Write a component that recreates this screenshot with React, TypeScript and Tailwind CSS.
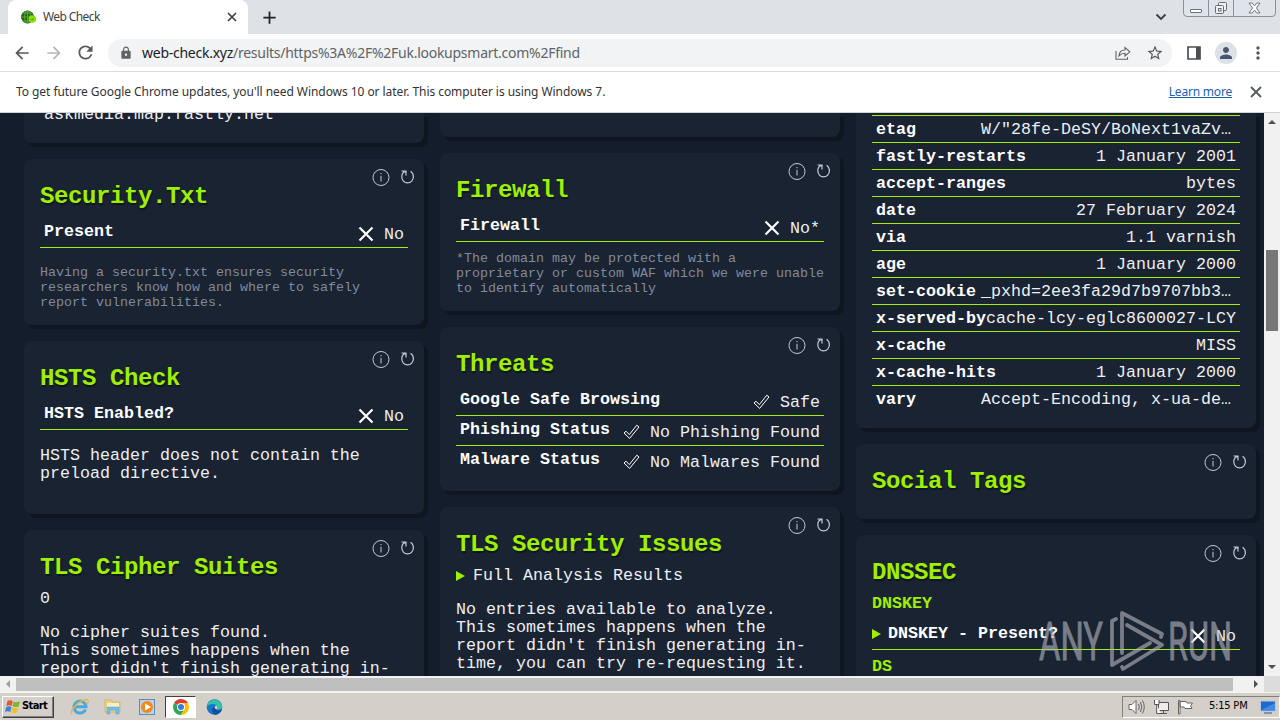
import type { ReactNode } from "react";
import {
  MdAdd,
  MdArrowBack,
  MdArrowForward,
  MdLock,
  MdMoreVert,
  MdPerson,
  MdRefresh,
  MdStarBorder,
} from "react-icons/md";

const headers = [
  { name: "etag", value: 'W/"28fe-DeSY/BoNext1vaZv…' },
  { name: "fastly-restarts", value: "1 January 2001" },
  { name: "accept-ranges", value: "bytes" },
  { name: "date", value: "27 February 2024" },
  { name: "via", value: "1.1 varnish" },
  { name: "age", value: "1 January 2000" },
  { name: "set-cookie", value: "_pxhd=2ee3fa29d7b9707bb3…" },
  { name: "x-served-by", value: "cache-lcy-eglc8600027-LCY" },
  { name: "x-cache", value: "MISS" },
  { name: "x-cache-hits", value: "1 January 2000" },
  { name: "vary", value: "Accept-Encoding, x-ua-de…" },
];

function CrossIcon() {
  return (
    <svg width="16" height="16" viewBox="0 0 16 16" className="mr-[10px] mb-[3px]" aria-hidden="true">
      <path d="M1.5 1.5 14.5 14.5M14.5 1.5 1.5 14.5" stroke="#fff" strokeWidth="2.2" />
    </svg>
  );
}

function CheckIcon() {
  return (
    <svg width="17" height="16" viewBox="0 0 17 16" className="mr-[10px] mb-[3px]" aria-hidden="true">
      <path d="M1 9 3 7.2 6.3 10.6 13.8 1.2 16 3 6.6 14.4Z" fill="none" stroke="#fff" strokeWidth="1" />
    </svg>
  );
}

function CardActions() {
  return (
    <div className="absolute right-[9px] top-[9px] flex items-center gap-[10px] text-[#c3cad9]">
      <svg width="18" height="18" viewBox="0 0 18 18" fill="none" stroke="currentColor" aria-hidden="true">
        <circle cx="9" cy="9.5" r="8" />
        <path d="M9 7.8V13.5M9 5V6.2" />
      </svg>
      <svg width="15" height="18" viewBox="0 0 15 18" fill="none" stroke="currentColor" strokeWidth="1.2" aria-hidden="true">
        <path d="M1.5 3H6V7.5M5.8 3.2C3 4 1.8 6.4 1.8 8.8 1.8 12.3 4.2 14.8 7.5 14.8S13.4 12.3 13.4 8.8C13.4 6.5 12.4 4.5 10.6 3.3" />
      </svg>
    </div>
  );
}

function Card({ title, height, children }: { title: string; height: string; children?: ReactNode }) {
  return (
    <section
      className={`relative shrink-0 rounded-lg bg-[#1a2332] px-4 pt-6 shadow-[4px_4px_0_#0f1620] ${height}`}
    >
      <CardActions />
      <h2 className="text-[24px] leading-[28px] font-bold tracking-[-0.4px] text-[#9fef00] [text-shadow:1px_2px_1px_#0f1620]">
        {title}
      </h2>
      <div className="pt-[7px]">{children}</div>
    </section>
  );
}

function Row({
  label,
  value,
  icon,
  last,
}: {
  label: ReactNode;
  value: string;
  icon?: ReactNode;
  last?: boolean;
}) {
  return (
    <div
      className={`flex h-[30px] justify-between border-b px-1 ${last ? "border-transparent" : "border-[#9fef00]"}`}
    >
      <span className="flex items-center h-5 mt-[4px] font-bold">{label}</span>
      <span className="flex items-center h-5 mt-[7px] text-[#eceff4]">
        {icon}
        {value}
      </span>
    </div>
  );
}

function Marker() {
  return (
    <svg width="9" height="10" viewBox="0 0 9 10" className="mb-px" aria-hidden="true">
      <path d="M0 0 9 5 0 10Z" fill="#9fef00" />
    </svg>
  );
}

function TabStrip() {
  return (
    <div className="relative flex h-[34px] shrink-0 items-center bg-[#dee1e6] pl-2">
      <div className="flex h-full w-60 items-center rounded-t-lg bg-white pl-3 pr-[11px]">
        <svg width="17" height="16" viewBox="0 0 17 16" aria-hidden="true">
          <circle cx="7.5" cy="8" r="6.5" fill="#1f6a1f" />
          <path d="M1 8H14M7.5 1.5V14.5M3 4H12M3 12H12" stroke="#70b830" strokeWidth=".7" />
          <ellipse cx="7.5" cy="8" rx="3" ry="6.5" fill="none" stroke="#70b830" strokeWidth=".7" />
          <circle cx="12.3" cy="10" r="3.8" fill="#8be000" />
          <path d="m10.6 10 1.3 1.3 2-2.4" stroke="#4c9a00" fill="none" />
        </svg>
        <span className="ml-[6px] grow text-[12px] tracking-[-0.6px] text-[#3c4043]">Web Check</span>
        <svg width="10" height="10" viewBox="0 0 10 10" aria-hidden="true">
          <path d="M1 1 9 9M9 1 1 9" stroke="#3c4043" strokeWidth="1.7" />
        </svg>
      </div>
      <MdAdd size={21} color="#202124" className="ml-[11px]" />
      <svg width="12" height="8" viewBox="0 0 12 8" className="ml-auto mr-[113px]" aria-hidden="true">
        <path d="M1.5 1.5 6 6 10.5 1.5" fill="none" stroke="#3c4043" strokeWidth="1.9" />
      </svg>
      <div className="absolute right-[4px] -top-px flex h-[18px] w-[93px] rounded-b-[4px] border border-[#8a9099] bg-[#dfe3ea]">
        <div className="flex w-[25px] items-end justify-center border-r border-[#8a9099] pb-[3px]">
          <span className="h-[4px] w-3 rounded-[1px] border border-[#6b7078] bg-white" />
        </div>
        <div className="flex w-[25px] items-center justify-center border-r border-[#8a9099]">
          <svg width="14" height="14" viewBox="0 0 14 14" fill="#eef0f4" stroke="#666b74" aria-hidden="true">
            <rect x="4.5" y="1.5" width="8" height="8" rx="1" />
            <rect x="1.5" y="4.5" width="8" height="8" rx="1" />
            <rect x="4.5" y="7.5" width="2.5" height="2.5" />
          </svg>
        </div>
        <div className="flex grow items-center justify-center">
          <svg width="13" height="12" viewBox="0 0 13 12" fill="#fff" stroke="#666b74" strokeWidth=".9" aria-hidden="true">
            <path d="M1 1H4.2L6.5 3.8 8.8 1H12L8.4 6 12 11H8.8L6.5 8.2 4.2 11H1L4.6 6Z" />
          </svg>
        </div>
      </div>
    </div>
  );
}

function Toolbar() {
  return (
    <div className="flex h-[38px] shrink-0 items-center border-b border-[#dadce0] bg-white pl-3 pr-[12px]">
      <MdArrowBack size={20} color="#55585c" />
      <MdArrowForward size={20} color="#b5b7ba" className="ml-3" />
      <MdRefresh size={21} color="#55585c" className="ml-[11px]" />
      <div className="ml-3 flex h-7 w-[1064px] items-center rounded-full bg-[#f1f3f4] pl-[11px] pr-2">
        <MdLock size={14} color="#5f6368" />
        <span className="ml-[9px] grow text-[14px] tracking-[-0.26px] text-[#5f6368]">
          <span className="text-[#202124]">web-check.xyz</span>
          /results/https%3A%2F%2Fuk.lookupsmart.com%2Ffind
        </span>
        <svg width="16" height="16" viewBox="0 0 16 16" fill="none" stroke="#5f6368" strokeWidth="1.1" aria-hidden="true">
          <path d="M1 6V14.2H12.5V12" />
          <path d="M4 10.8C4.3 7 6.8 5 10 5V2.4L14.8 6.8 10 11V8.3C7.5 8.3 5.6 9 4 10.8Z" />
        </svg>
        <MdStarBorder size={18} color="#55585c" className="ml-[15px]" />
      </div>
      <svg width="14" height="14" viewBox="0 0 14 14" className="ml-[15px]" aria-hidden="true">
        <path d="M1 1H13V13H1Z" fill="none" stroke="#4b4e52" strokeWidth="1.7" />
        <path d="M9 1H13V13H9Z" fill="#4b4e52" />
      </svg>
      <div className="ml-[14px] flex h-[22px] w-[22px] items-center justify-center rounded-full bg-[#dce1e7]">
        <MdPerson size={18} color="#46566f" />
      </div>
      <MdMoreVert size={20} color="#55585c" className="ml-[11px]" />
    </div>
  );
}

function ScrollArrow({ d }: { d: string }) {
  return (
    <svg width="8" height="8" viewBox="0 0 8 8" aria-hidden="true">
      <path d={d} fill="#505050" />
    </svg>
  );
}

function Watermark() {
  return (
    <svg
      width="196"
      height="66"
      viewBox="0 0 196 66"
      className="absolute left-[1038px] top-[495px] opacity-60"
      aria-hidden="true"
    >
      <g fill="#b7bac1" stroke="#b7bac1" strokeWidth=".9" fontFamily="Roboto" fontSize="53">
        <text x="1" y="52" textLength="64" lengthAdjust="spacingAndGlyphs">
          ANY
        </text>
        <text x="130" y="52" textLength="64" lengthAdjust="spacingAndGlyphs">
          RUN
        </text>
      </g>
      <g fill="none" stroke="#b7bac1" strokeWidth="3.8" strokeLinejoin="round" strokeLinecap="round">
        <path d="M84 45V5L124 26 123 29" />
        <path d="M78 11 74 13V57L112 35" />
        <path d="M89 17 124 37 85 61 84 59" />
      </g>
    </svg>
  );
}

function Taskbar() {
  return (
    <div className="flex h-[28px] shrink-0 items-center border-t border-[#f5f3f0] bg-[#d4cfc8] pl-[2px] font-['DejaVu_Sans',sans-serif] font-stretch-condensed">
      <button
        type="button"
        className="flex h-[22px] w-[52px] items-center border border-t-white border-l-white border-r-[#404040] border-b-[#404040] pl-[2px] text-[11px] tracking-[-0.6px] font-bold text-black shadow-[inset_-1px_-1px_0_#808080]"
      >
        <svg width="16" height="15" viewBox="0 0 16 15" className="mr-px shrink-0" aria-hidden="true">
          <path d="M2.5 2Q5 .5 7.7 2L6.7 7Q4 5.7 1.3 7Z" fill="#e8572a" />
          <path d="M8.6 2.4Q11 4 15 2.2L13.6 7.4Q10.5 8.8 7.6 7.3Z" fill="#7cb82f" />
          <path d="M1.1 8Q4 6.7 6.4 8L5.3 13Q2.8 11.6 0 13Z" fill="#3b84d8" />
          <path d="M7.4 8.3Q10.5 9.8 13.3 8.4L12 13.3Q9 15 6.2 13.4Z" fill="#f6be2c" />
        </svg>
        Start
      </button>

      {/* Internet Explorer */}
      <svg width="20" height="18" viewBox="0 0 20 18" className="ml-4" fill="none" aria-hidden="true">
        <path d="M15.5 11.5A6 6 0 1 1 16 8.8H5" stroke="#4aa9e0" strokeWidth="3" />
        <path d="M2 16C-1 13 8 3.5 15 1.8 19 .9 18.5 4 17 6" stroke="#e5b83a" strokeWidth="1.4" />
      </svg>
      {/* Explorer */}
      <svg width="18" height="17" viewBox="0 0 18 17" className="ml-[14px]" aria-hidden="true">
        <path d="M1 2H7L8 4H16V14H1Z" fill="#ecd37c" stroke="#c9a748" strokeWidth=".6" />
        <path d="M3 5H15V9H3Z" fill="#f9f0c5" />
        <path d="M3 16V9H15V16H12V12H6V16Z" fill="#74bfe6" stroke="#4c9cc9" strokeWidth=".5" />
      </svg>
      {/* Media player */}
      <svg width="16" height="16" viewBox="0 0 16 16" className="ml-[17px]" aria-hidden="true">
        <rect x=".5" y=".5" width="15" height="15" fill="#b8d4ea" stroke="#5d8cb5" />
        <circle cx="8" cy="8" r="6" fill="#f28a1b" />
        <path d="M6 4.5 12 8 6 11.5Z" fill="#fff" />
      </svg>
      {/* Chrome */}
      <div className="ml-[10px] flex h-[22px] w-[31px] items-center justify-center border border-t-[#404040] border-l-[#404040] border-r-white border-b-white bg-white">
        <svg width="16" height="16" viewBox="0 0 16 16" aria-hidden="true">
          <path d="M8 8 1.1 4A8 8 0 0 1 14.9 4Z" fill="#e33b2e" />
          <path d="M8 8 1.1 4A8 8 0 0 0 8 16L11.5 10Z" fill="#2da94f" />
          <path d="M8 8 11.5 10 8 16A8 8 0 0 0 14.9 4H8Z" fill="#fdbd00" />
          <circle cx="8" cy="8" r="4" fill="#fff" />
          <circle cx="8" cy="8" r="3" fill="#3b79e0" />
        </svg>
      </div>
      {/* Edge */}
      <svg width="17" height="16" viewBox="0 0 17 16" className="ml-[10px]" aria-hidden="true">
        <circle cx="8.5" cy="8" r="7.8" fill="#1676c8" />
        <path d="M.8 8A7.8 7.8 0 0 1 16.3 7.5C16.3 10 13.5 11 10.5 10.4 12 8.5 10.8 5 7.2 5 3.8 5 1.2 6.5.8 8Z" fill="#37c1a4" />
        <path d="M10 10.4C12 12 14.5 11.8 16 10.8 14.7 14 12 15.8 9.5 15.7 6.5 15 5 11 7.4 8Z" fill="#0d4f9e" />
        <path d="M10.5 10.4C12 9 11.5 7.2 10 6.6 8 8 8.6 10 10.5 10.4Z" fill="#d4cfc8" />
      </svg>

      <div className="ml-auto flex h-[22px] w-[158px] items-center border border-t-[#808080] border-l-[#808080] border-b-white border-r-white pl-[5px] text-[11px] text-black">
        <svg width="18" height="16" viewBox="0 0 18 16" fill="none" stroke="#666" aria-hidden="true">
          <path d="M1 5.5H4L8 1.5V14.5L4 10.5H1Z" fill="#fff" />
          <path d="M10.5 5Q12 8 10.5 11M12.5 3Q15 8 12.5 13M14.5 1.5Q18 8 14.5 14.5" />
        </svg>
        <svg width="17" height="16" viewBox="0 0 17 16" className="ml-[7px]" fill="#eee" stroke="#555" aria-hidden="true">
          <path d="M5.5 3.5H15.5V11.5H5.5ZM8 14.5H14M10.5 12V14.5" />
          <path d="M1.5 1V5.5H6V1M3.7 5.5V14.5H8" fill="#fff" />
        </svg>
        <svg width="17" height="16" viewBox="0 0 17 16" className="ml-[7px]" fill="#fff" stroke="#666" aria-hidden="true">
          <path d="M1.5 15V1.5H3V15ZM3 2.5H9L10 4H15.5L13.5 7 15 9.5H8L7 8H3Z" />
        </svg>
        <span className="ml-[15px] tracking-[-0.2px] whitespace-nowrap">5:15 PM</span>
        <svg width="16" height="14" viewBox="0 0 16 14" className="ml-auto mr-[3px] shrink-0" aria-hidden="true">
          <path d="M.5 1H15.5V11H.5Z" fill="#2168c9" stroke="#b5c6df" />
          <path d="M1 10 15 3V10.5H1Z" fill="#3f8ae3" />
          <path d="M4 13H12" stroke="#34507b" />
        </svg>
      </div>
    </div>
  );
}

export default function App() {
  return (
    <div className="flex h-screen w-[1280px] flex-col overflow-hidden bg-white font-['Noto_Sans',sans-serif]">
      <TabStrip />
      <Toolbar />
      <div className="flex h-[41px] shrink-0 items-center border-b border-[#d0d2d6] pl-4 pr-[18px] text-[12px] text-[#333]">
        <span className="grow tracking-[-0.06px]">
          To get future Google Chrome updates, you&apos;ll need Windows 10 or later. This computer is using Windows 7.
        </span>
        <a href="#" className="tracking-[-0.2px] text-[#1a62b8] underline">
          Learn more
        </a>
        <svg width="12" height="12" viewBox="0 0 12 12" className="ml-[18px]" aria-hidden="true">
          <path d="M1 1 11 11M11 1 1 11" stroke="#55585c" strokeWidth="1.8" />
        </svg>
      </div>

      <div className="flex h-[563px] shrink-0">
        <main className="relative flex w-[1264px] items-start gap-4 overflow-hidden bg-[#141d2b] pl-6 font-['Liberation_Mono',monospace] text-[16.67px] leading-[18px] text-white">
          <div className="flex w-[400px] shrink-0 flex-col gap-4">
            <div className="h-[30px] rounded-b-lg bg-[#1a2332] pl-5 shadow-[4px_4px_0_#0f1620]">
              <p className="-mt-[7px] text-[#eceff4]">askmedia.map.fastly.net</p>
            </div>
            <Card title="Security.Txt" height="h-[166px]">
              <Row label="Present" value="No" icon={<CrossIcon />} />
              <p className="mt-[17px] text-[13.33px] leading-[15px] text-[#818a9b]">
                Having a security.txt ensures security researchers know how and where to safely report
                vulnerabilities.
              </p>
            </Card>
            <Card title="HSTS Check" height="h-[173px]">
              <Row label="HSTS Enabled?" value="No" icon={<CrossIcon />} />
              <p className="mt-[17px] text-[#eceff4]">HSTS header does not contain the preload directive.</p>
            </Card>
            <Card title="TLS Cipher Suites" height="h-[260px]">
              <p className="pt-px text-[#eceff4]">0</p>
              <p className="mt-4 text-[#eceff4]">
                No cipher suites found.
                <br />
                This sometimes happens when the report didn&apos;t finish generating in-time, you can try
                re-requesting it.
              </p>
            </Card>
          </div>

          <div className="flex w-[400px] shrink-0 flex-col gap-4">
            <div className="h-6 rounded-b-lg bg-[#1a2332] shadow-[4px_4px_0_#0f1620]" />
            <Card title="Firewall" height="h-[158px]">
              <Row label="Firewall" value="No*" icon={<CrossIcon />} />
              <p className="mt-[9px] text-[13.33px] leading-[15px] text-[#818a9b]">
                *The domain may be protected with a
                <br />
                proprietary or custom WAF which we were unable
                <br />
                to identify automatically
              </p>
            </Card>
            <Card title="Threats" height="h-[164px]">
              <Row label="Google Safe Browsing" value="Safe" icon={<CheckIcon />} />
              <Row label="Phishing Status" value="No Phishing Found" icon={<CheckIcon />} />
              <Row label="Malware Status" value="No Malwares Found" icon={<CheckIcon />} last />
            </Card>
            <Card title="TLS Security Issues" height="h-[260px]">
              <p className="flex items-center gap-2 pt-px text-[#eceff4]">
                <Marker />
                Full Analysis Results
              </p>
              <p className="mt-4 text-[#eceff4]">
                No entries available to analyze.
                <br />
                This sometimes happens when the
                <br />
                report didn&apos;t finish generating in-
                <br />
                time, you can try re-requesting it.
              </p>
            </Card>
          </div>

          <div className="flex w-[400px] shrink-0 flex-col gap-4">
            <div className="h-[315px] rounded-b-lg bg-[#1a2332] px-4 shadow-[4px_4px_0_#0f1620]">
              <div className="h-[3px] border-b border-[#9fef00]" />
              {headers.map((h) => (
                <div
                  key={h.name}
                  className="flex h-[27px] justify-between border-b border-[#9fef00] px-1 pt-[4px] leading-[20px] whitespace-nowrap last:border-transparent"
                >
                  <span className="font-bold">{h.name}</span>
                  <span className={h.value.endsWith("…") ? "pr-[5px] text-[#eceff4]" : "text-[#eceff4]"}>
                    {h.value}
                  </span>
                </div>
              ))}
            </div>
            <Card title="Social Tags" height="h-[75px]" />
            <Card title="DNSSEC" height="h-[260px]">
              <h3 className="h-[26px] pt-px font-bold text-[#9fef00]">DNSKEY</h3>
              <Row
                label={
                  <span className="-ml-1 flex items-center gap-[7px]">
                    <Marker />
                    DNSKEY - Present?
                  </span>
                }
                value="No"
                icon={<CrossIcon />}
              />
              <h3 className="mt-2 font-bold text-[#9fef00]">DS</h3>
            </Card>
          </div>
          <Watermark />
        </main>
        <div className="flex w-4 flex-col items-center bg-[#f1f1f1] py-[5px]">
          <ScrollArrow d="M0 6 4 2 8 6Z" />
          <div className="mt-[124px] h-[81px] w-3 bg-[#787878]" />
          <div className="mt-auto">
            <ScrollArrow d="M0 2 4 6 8 2Z" />
          </div>
        </div>
      </div>

      <div className="flex h-4 shrink-0 items-center bg-[#f1f1f1]">
        <div className="flex w-4 justify-center opacity-50">
          <ScrollArrow d="M6 0 2 4 6 8Z" />
        </div>
        <div className="h-[13px] w-[1217px] bg-[#bfbfbf]" />
        <div className="ml-[19px]">
          <ScrollArrow d="M2 0 6 4 2 8Z" />
        </div>
        <div className="ml-auto h-4 w-4 bg-[#dcdcdc]" />
      </div>
      <Taskbar />
    </div>
  );
}
